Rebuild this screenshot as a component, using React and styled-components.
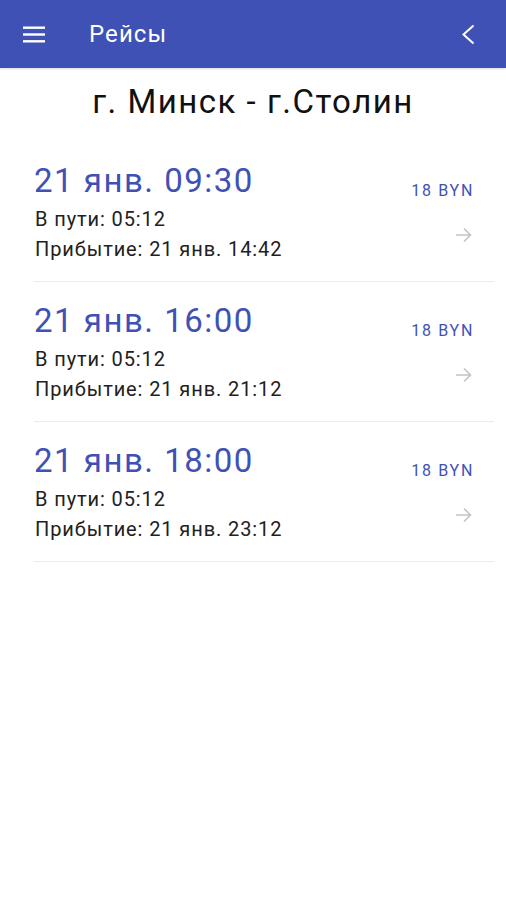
import React from "react";
import styled, { createGlobalStyle } from "styled-components";

const Global = createGlobalStyle`
    html, body {
        margin: 0;
        padding: 0;
        background: #fff;
        font-family: Roboto, "Noto Sans", sans-serif;
    }
`;

const Page = styled.div`
    width: 506px;
    min-height: 900px;
    background: #fff;
`;

const Toolbar = styled.header`
    height: 68px;
    background: #3f51b5;
    display: flex;
    align-items: center;
    padding: 0 24px 0 23px;
    box-sizing: border-box;
    box-shadow: 0 1px 2px rgba(0, 0, 0, 0.15);
`;

const MenuButton = styled.div`
    width: 22px;
    height: 18px;
    display: flex;
    align-items: center;
`;

const ToolbarTitle = styled.h1`
    flex: 1;
    margin: 0 0 0 44px;
    color: #fff;
    font-size: 24px;
    font-weight: 400;
    letter-spacing: 1.1px;
    line-height: 28px;
`;

const BackButton = styled.div`
    width: 16px;
    height: 22px;
    display: flex;
    align-items: center;
    justify-content: center;
    margin-right: 6px;
`;

const Route = styled.h2`
    margin: 16px 0 22px;
    text-align: center;
    font-size: 33px;
    font-weight: 400;
    letter-spacing: 1.5px;
    line-height: 36px;
    color: #111;
`;

const List = styled.div`
    margin: 0 12px 0 34px;
`;

const Trip = styled.div`
    display: flex;
    justify-content: space-between;
    padding: 19px 22px 17px 0;
    border-bottom: 1px solid #ececec;
`;

const Info = styled.div`
    display: flex;
    flex-direction: column;
`;

const Departure = styled.div`
    font-size: 33px;
    letter-spacing: 1.5px;
    line-height: 40px;
    color: #3f51b5;
`;

const Detail = styled.div`
    font-size: 20px;
    letter-spacing: 0.9px;
    line-height: 30px;
    color: #212121;
    margin-top: ${(p) => p.$first ? "3px" : "0"};
    margin-left: 1px;
`;

const Side = styled.div`
    display: flex;
    flex-direction: column;
    align-items: flex-end;
`;

const Price = styled.div`
    margin-top: 20px;
    font-size: 16px;
    font-weight: 400;
    letter-spacing: 1.7px;
    line-height: 20px;
    color: #3f51b5;
    margin-right: -2px;
`;

const Arrow = styled.div`
    margin-top: 26px;
    width: 17px;
    height: 16px;
`;

const trips = [
    { dep: "21 янв. 09:30", arr: "21 янв. 14:42" },
    { dep: "21 янв. 16:00", arr: "21 янв. 21:12" },
    { dep: "21 янв. 18:00", arr: "21 янв. 23:12" },
];

const App = () => {
    return (
        <Page>
            <Global />
            <Toolbar>
                <MenuButton>
                    <svg width="22" height="17" viewBox="0 0 22 17">
                        <rect x="0" y="0.5" width="22" height="2.4" fill="#fff" />
                        <rect x="0" y="7.3" width="22" height="2.4" fill="#fff" />
                        <rect x="0" y="14.1" width="22" height="2.4" fill="#fff" />
                    </svg>
                </MenuButton>
                <ToolbarTitle>Рейсы</ToolbarTitle>
                <BackButton>
                    <svg width="14" height="21" viewBox="0 0 14 21">
                        <path d="M12.5 1.5 L2.5 10.5 L12.5 19.5" fill="none" stroke="#fff" strokeWidth="2" />
                    </svg>
                </BackButton>
            </Toolbar>
            <Route>г. Минск - г.Столин</Route>
            <List>
                {trips.map((t) => (
                    <Trip key={t.dep}>
                        <Info>
                            <Departure>{t.dep}</Departure>
                            <Detail $first>В пути: 05:12</Detail>
                            <Detail>Прибытие: {t.arr}</Detail>
                        </Info>
                        <Side>
                            <Price>18 BYN</Price>
                            <Arrow>
                                <svg width="17" height="16" viewBox="0 0 17 16">
                                    <path d="M1 8 H15.5 M9 1.5 L15.5 8 L9 14.5" fill="none" stroke="#c4c4c4" strokeWidth="1.6" />
                                </svg>
                            </Arrow>
                        </Side>
                    </Trip>
                ))}
            </List>
        </Page>
    );
};

export default App;
